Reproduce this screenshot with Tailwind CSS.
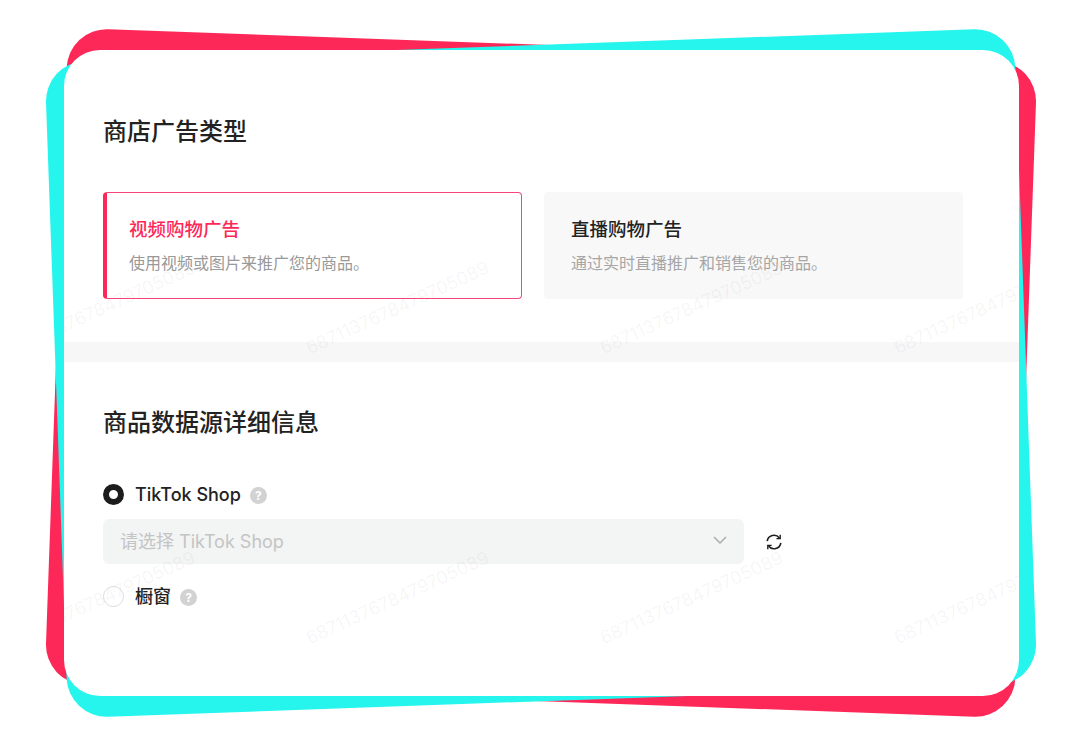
<!DOCTYPE html>
<html lang="zh-CN">
<head>
    <meta charset="UTF-8">
    <meta name="viewport" content="width=device-width, initial-scale=1.0">
    <title>商店广告类型</title>
    <script src="https://cdn.jsdelivr.net/npm/@tailwindcss/browser@4"></script>
</head>
<body class="bg-white">
    <div class="relative w-[1080px] h-[752px] overflow-hidden bg-white font-['Inter','Noto_Sans_CJK_SC',sans-serif]">
        <!-- the two tilted frames behind the card -->
        <div class="absolute left-[56px] top-[45px] w-[970px] h-[656px] rounded-[40px] rotate-[2.05deg] bg-[#fe2858]"></div>
        <div class="absolute left-[56px] top-[45px] w-[970px] h-[656px] rounded-[40px] rotate-[-2.05deg] bg-[#26f5ee]"></div>

        <div class="relative ml-[64px] top-[50px] w-[955px] h-[646px] rounded-[36px] bg-white overflow-hidden">
            <div class="pt-[64px] px-[39px]">
                <h2 class="h-[36px] leading-[36px] text-[24px] font-medium text-[#222]">商店广告类型</h2>
                <div class="mt-[42px] w-[860px] grid grid-cols-2 gap-[22px]">
                    <div class="h-[107px] rounded-[4px] border border-[#f5457a] border-l-[4px] border-l-[#fe2858] pl-[22px] pt-[22px]">
                        <div class="h-[28px] leading-[28px] text-[18.5px] font-medium text-[#fe2858]">视频购物广告</div>
                        <div class="mt-[6px] h-[28px] leading-[28px] text-[16px] text-[#999]">使用视频或图片来推广您的商品。</div>
                    </div>
                    <div class="h-[107px] rounded-[4px] bg-[#f8f8f8] pl-[27px] pt-[23px]">
                        <div class="h-[28px] leading-[28px] text-[18.5px] font-medium text-[#222]">直播购物广告</div>
                        <div class="mt-[6px] h-[28px] leading-[28px] text-[16px] text-[#a6a6a6]">通过实时直播推广和销售您的商品。</div>
                    </div>
                </div>
            </div>

            <div class="mt-[43px] h-[20px] bg-[#f7f7f7]"></div>

            <div class="px-[39px]">
                <h2 class="mt-[43px] h-[36px] leading-[36px] text-[24px] font-medium text-[#222]">商品数据源详细信息</h2>

                <div class="mt-[41px] h-[24px] flex items-center">
                    <span class="w-[21px] h-[21px] rounded-full border-[6px] border-[#1c1c1c] bg-white"></span>
                    <span class="ml-[11px] mt-[1px] text-[18px] font-medium leading-[24px] text-[#222]">TikTok Shop</span>
                    <span class="ml-[9px] mt-[2px] w-[17px] h-[17px] rounded-full bg-[#d2d2d2] text-white text-[12px] font-bold leading-[17px] text-center">?</span>
                </div>

                <div class="mt-[13px] flex items-center">
                    <div class="w-[641px] h-[45px] rounded-[6px] bg-[#f3f4f4] pl-[17px] pr-[17px] flex items-center justify-between">
                        <span class="text-[18px] text-[#c4c4c4] leading-[45px]">请选择 TikTok Shop</span>
                        <svg class="w-[14px] h-[8px] -mt-[3px]" viewBox="0 0 14 8" fill="none" stroke="#a8a8a8" stroke-width="1.4"><path d="M1 1l6 6 6-6"/></svg>
                    </div>
                    <svg class="ml-[21px] w-[18px] h-[18px]" viewBox="0 0 18 18" fill="none" stroke="#1f1f1f" stroke-width="1.6">
                        <path d="M2.2 8.2A6.8 6.8 0 0 1 14.4 5"/>
                        <path d="M15.8 9.8A6.8 6.8 0 0 1 3.6 13"/>
                        <path d="M15.2 1.8v3.8h-3.8" stroke-width="1.4"/>
                        <path d="M2.8 16.2v-3.8h3.8" stroke-width="1.4"/>
                    </svg>
                </div>

                <div class="mt-[20px] h-[24px] flex items-center">
                    <span class="w-[21px] h-[21px] rounded-full border border-[#dcdcdc] bg-white"></span>
                    <span class="ml-[11px] mt-[1px] text-[18px] font-medium leading-[24px] text-[#222]">橱窗</span>
                    <span class="ml-[9px] mt-[2px] w-[17px] h-[17px] rounded-full bg-[#d2d2d2] text-white text-[12px] font-bold leading-[17px] text-center">?</span>
                </div>
            </div>

            <!-- watermark tiled over the card -->
            <div class="absolute left-[-108px] top-[112px] w-[1176px] grid grid-cols-4 auto-rows-[290px] pointer-events-none text-[18px] text-black/[0.05]">
                <div class="flex items-center justify-center"><span class="-rotate-[24.5deg] whitespace-nowrap">6871137678479705089</span></div>
                <div class="flex items-center justify-center"><span class="-rotate-[24.5deg] whitespace-nowrap">6871137678479705089</span></div>
                <div class="flex items-center justify-center"><span class="-rotate-[24.5deg] whitespace-nowrap">6871137678479705089</span></div>
                <div class="flex items-center justify-center"><span class="-rotate-[24.5deg] whitespace-nowrap">6871137678479705089</span></div>
                <div class="flex items-center justify-center"><span class="-rotate-[24.5deg] whitespace-nowrap">6871137678479705089</span></div>
                <div class="flex items-center justify-center"><span class="-rotate-[24.5deg] whitespace-nowrap">6871137678479705089</span></div>
                <div class="flex items-center justify-center"><span class="-rotate-[24.5deg] whitespace-nowrap">6871137678479705089</span></div>
                <div class="flex items-center justify-center"><span class="-rotate-[24.5deg] whitespace-nowrap">6871137678479705089</span></div>
            </div>
        </div>
    </div>
</body>
</html>
